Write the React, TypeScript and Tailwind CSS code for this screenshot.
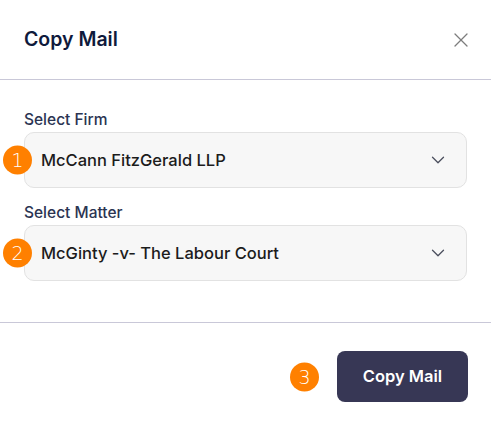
import { X, ChevronDown } from 'lucide-react'

function Badge({ n, className }: { n: number; className: string }) {
  return (
    <span
      className={`absolute flex h-[29px] w-[29px] items-center justify-center rounded-full bg-[#ff8000] text-[19px] leading-none text-white font-['DejaVu_Sans',sans-serif] font-light ${className}`}
    >
      {n}
    </span>
  )
}

function SelectField({ label, value, n }: { label: string; value: string; n: number }) {
  return (
    <div>
      <div className="mb-[2px] text-[15.5px] font-medium leading-[20px] text-[#2b3452]">{label}</div>
      <div className="relative">
        <Badge n={n} className="-left-[21px] top-1/2 -translate-y-1/2" />
        <div className="flex h-[56px] items-center justify-between rounded-[10px] border border-[#e2e2e2] bg-[#f7f7f7] pl-[16px] pr-[17px]">
          <span className="text-[16.5px] font-medium text-[#1c1c1c]">{value}</span>
          <ChevronDown className="h-[22px] w-[22px] text-[#4b4f5e]" strokeWidth={1.4} />
        </div>
      </div>
    </div>
  )
}

export default function App() {
  return (
    <div className="h-[425px] w-[491px] bg-white font-['Inter',sans-serif]">
      <div className="flex h-[79px] items-center justify-between pl-[24px] pr-[18px]">
        <h2 className="text-[19.5px] font-semibold text-[#0f1a3c]">Copy Mail</h2>
        <X className="h-[24px] w-[24px] text-[#7d7d7d]" strokeWidth={1.3} />
      </div>
      <div className="h-px bg-[#c9c8d8]" />
      <div className="flex h-[242px] flex-col gap-[15px] px-[24px] pt-[30px]">
        <SelectField label="Select Firm" value="McCann FitzGerald LLP" n={1} />
        <SelectField label="Select Matter" value="McGinty -v- The Labour Court" n={2} />
      </div>
      <div className="h-px bg-[#c9c8d8]" />
      <div className="flex items-center justify-end px-[23px] pt-[28px]">
        <div className="relative">
          <Badge n={3} className="-left-[47px] top-1/2 -translate-y-1/2" />
          <button className="h-[51px] w-[131px] rounded-[8px] bg-[#373755] text-[16.5px] font-semibold text-white">
            Copy Mail
          </button>
        </div>
      </div>
    </div>
  )
}
